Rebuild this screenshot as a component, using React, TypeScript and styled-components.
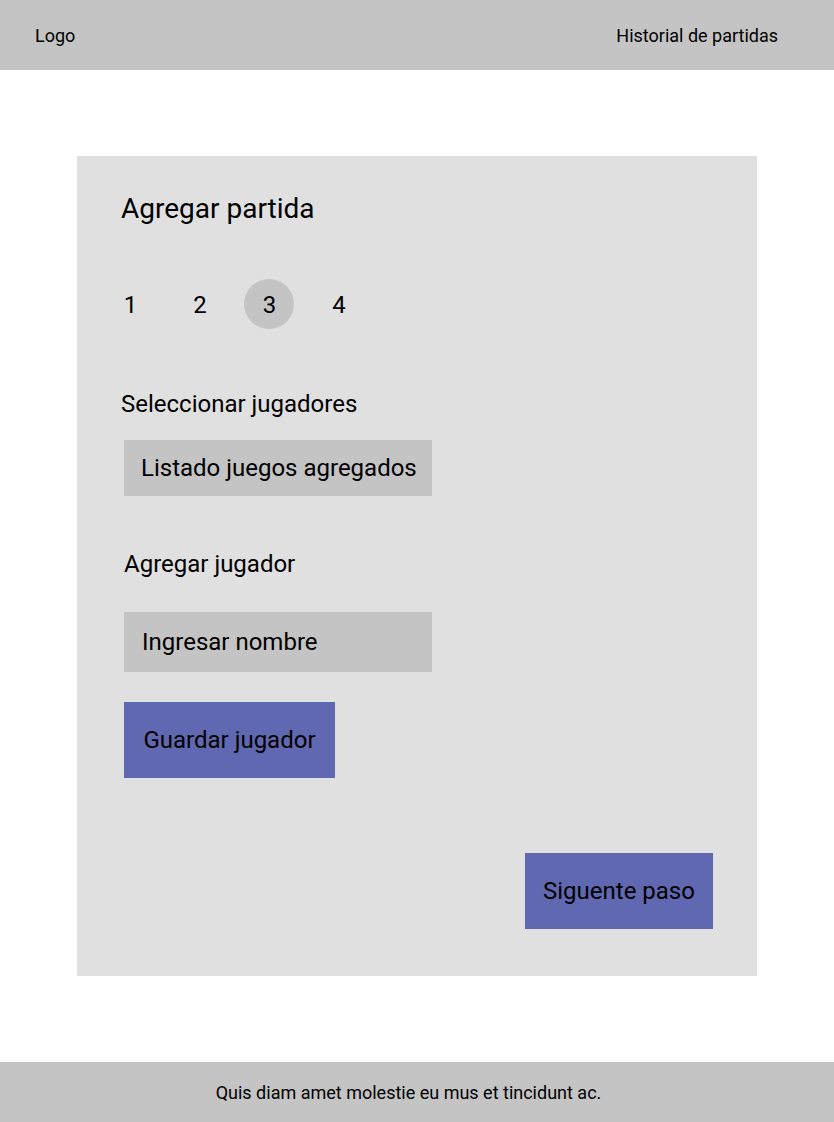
import React from "react";
import styled, { createGlobalStyle } from "styled-components";

const GlobalStyle = createGlobalStyle`
  html, body {
    margin: 0;
    padding: 0;
    background: #ffffff;
    font-family: Roboto, "Noto Sans", Arial, sans-serif;
    color: #000000;
  }
  * { box-sizing: border-box; }
`;

const Page = styled.div`
  display: flex;
  flex-direction: column;
  min-height: 1122px;
`;

const Header = styled.header`
  height: 70px;
  background: #c4c4c4;
  display: flex;
  align-items: center;
  justify-content: space-between;
  padding: 0 56px 0 35px;
  font-size: 18px;
`;

const NavText = styled.span`
  line-height: 21px;
`;

const Main = styled.main`
  flex: 1;
  padding: 86px 77px 86px;
`;

const Card = styled.section`
  background: #e0e0e0;
  height: 820px;
  padding: 36px 44px 47px;
  display: flex;
  flex-direction: column;
  align-items: flex-start;
`;

const Title = styled.h1`
  margin: 0;
  font-size: 28px;
  font-weight: 400;
  line-height: 33px;
`;

const Steps = styled.ol`
  list-style: none;
  margin: 54px 0 0 -16px;
  padding: 0;
  display: flex;
  gap: 19.5px;
`;

const Step = styled.li<{ $active?: boolean }>`
  width: 50px;
  height: 50px;
  border-radius: 50%;
  background: ${(p) => (p.$active ? "#c4c4c4" : "transparent")};
  display: flex;
  align-items: center;
  justify-content: center;
  padding: 2px 0 0 1px;
  font-size: 24px;
  line-height: 28px;
`;

const Label = styled.h2<{ $indent?: number; $top: number }>`
  margin: ${(p) => p.$top}px 0 0 ${(p) => p.$indent ?? 0}px;
  font-size: 24px;
  font-weight: 400;
  line-height: 28px;
`;

const Field = styled.div<{ $height: number; $top: number; $pad: number }>`
  margin: ${(p) => p.$top}px 0 0 3px;
  width: 308px;
  height: ${(p) => p.$height}px;
  background: #c4c4c4;
  display: flex;
  align-items: center;
  padding-left: ${(p) => p.$pad}px;
  font-size: 24px;
  line-height: 28px;
`;

const Button = styled.button<{ $width: number; $top: number }>`
  margin-top: ${(p) => p.$top}px;
  width: ${(p) => p.$width}px;
  height: 76px;
  border: none;
  border-radius: 0;
  background: #6068b1;
  color: #000000;
  font-family: Roboto, "Noto Sans", Arial, sans-serif;
  font-size: 24px;
  line-height: 28px;
  padding: 0;
  display: flex;
  align-items: center;
  justify-content: center;
  cursor: pointer;
`;

const SaveButton = styled(Button)`
  margin-left: 3px;
`;

const NextButton = styled(Button)`
  align-self: flex-end;
`;

const Footer = styled.footer`
  height: 60px;
  background: #c4c4c4;
  display: flex;
  align-items: center;
  justify-content: center;
  padding-right: 17px;
  font-size: 18px;
  line-height: 21px;
`;

export default function App() {
  return (
    <>
      <GlobalStyle />
      <Page>
        <Header>
          <NavText>Logo</NavText>
          <NavText>Historial de partidas</NavText>
        </Header>
        <Main>
          <Card>
            <Title>Agregar partida</Title>
            <Steps>
              <Step>1</Step>
              <Step>2</Step>
              <Step $active>3</Step>
              <Step>4</Step>
            </Steps>
            <Label $top={61}>Seleccionar jugadores</Label>
            <Field $top={22} $height={56} $pad={17}>
              Listado juegos agregados
            </Field>
            <Label $top={54} $indent={3}>
              Agregar jugador
            </Label>
            <Field $top={34} $height={60} $pad={18}>
              Ingresar nombre
            </Field>
            <SaveButton $top={30} $width={211}>
              Guardar jugador
            </SaveButton>
            <NextButton $top={75} $width={188}>
              Siguente paso
            </NextButton>
          </Card>
        </Main>
        <Footer>Quis diam amet molestie eu mus et tincidunt ac.</Footer>
      </Page>
    </>
  );
}
